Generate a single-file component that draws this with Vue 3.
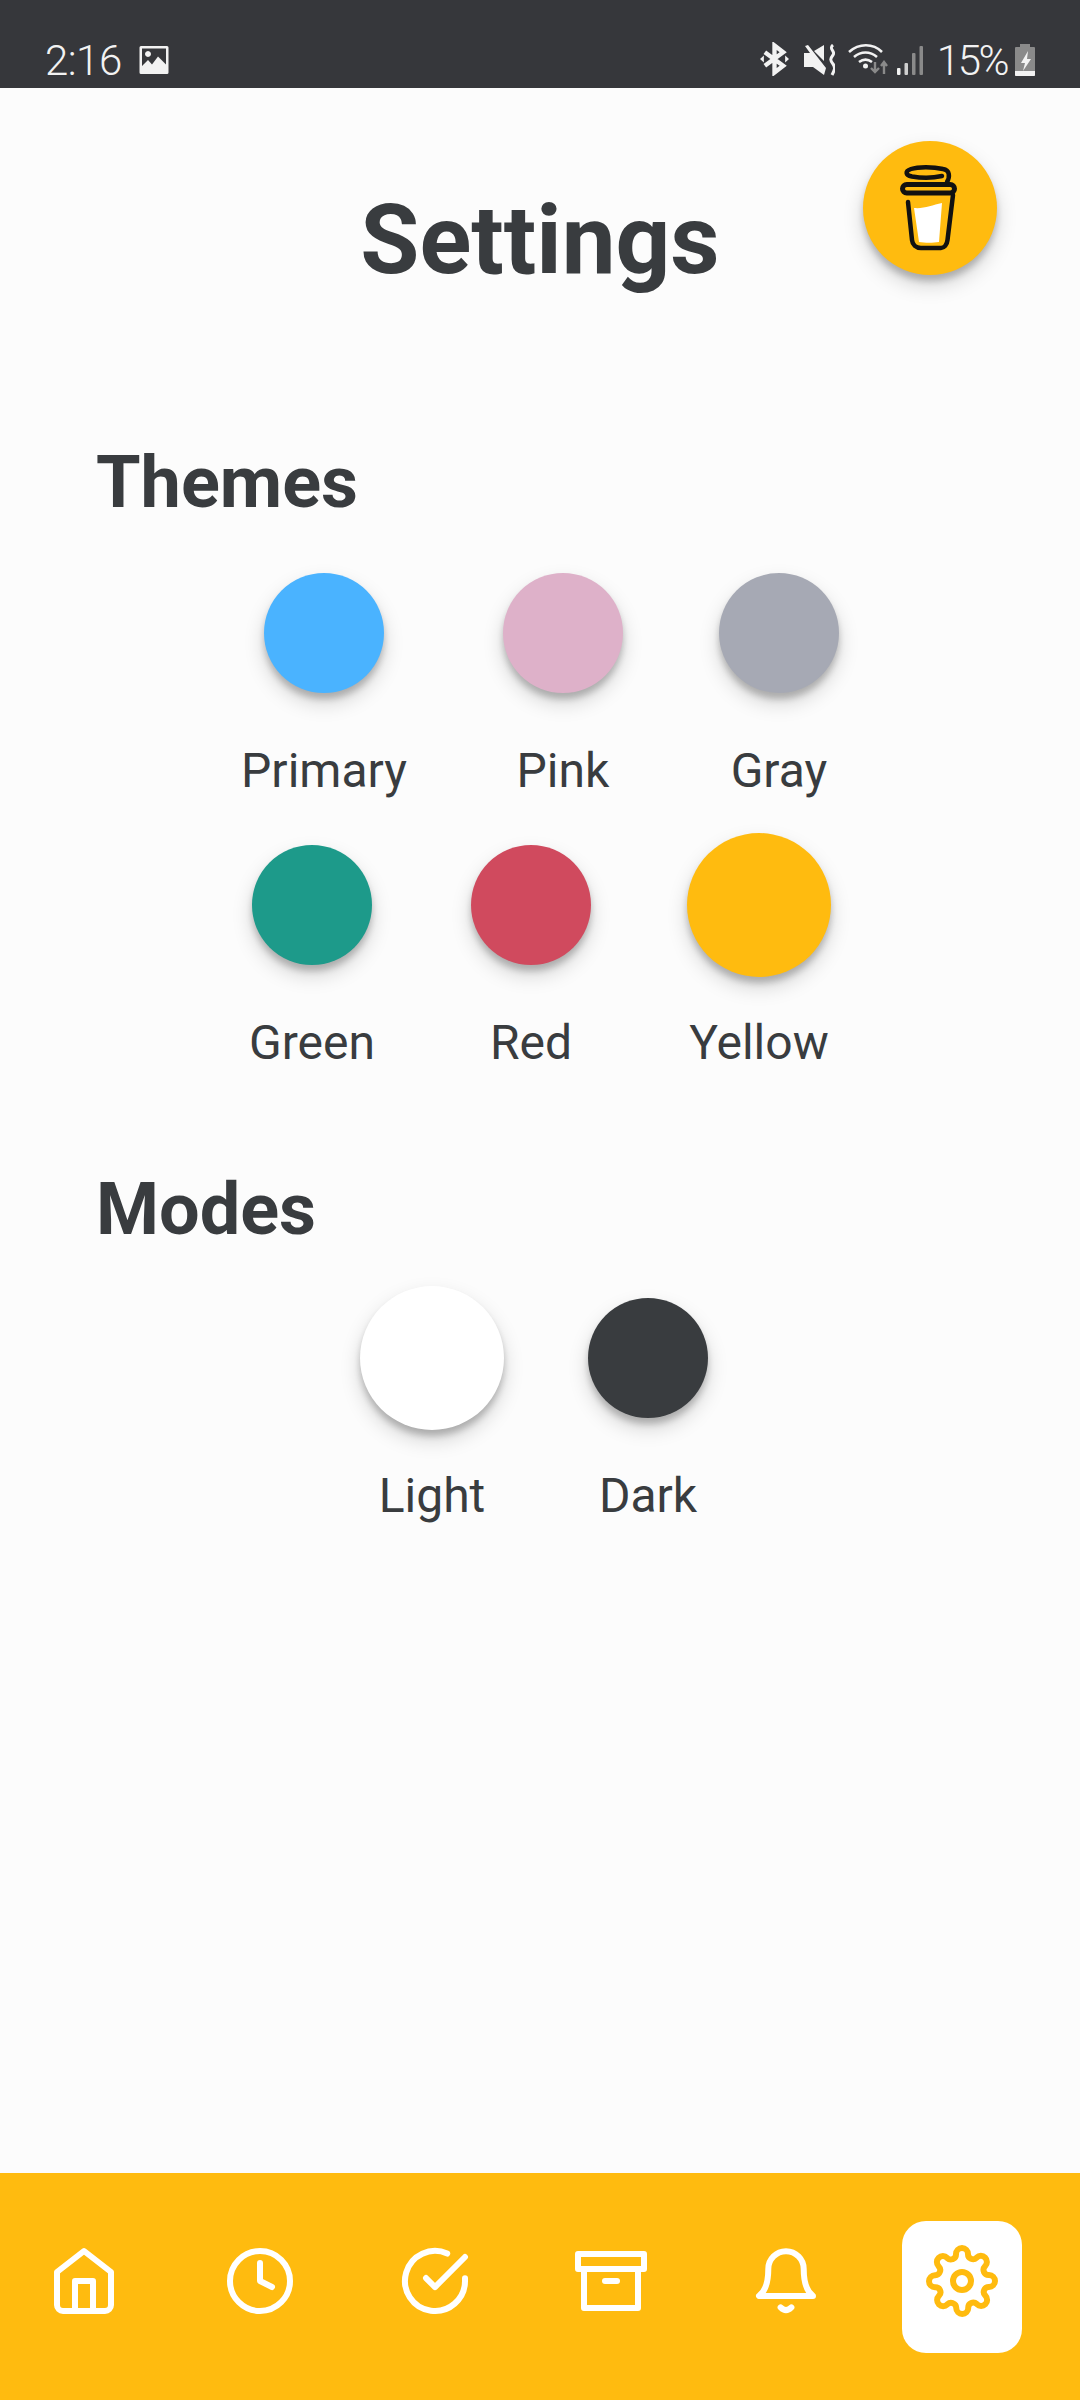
<template>
  <div class="screen">
    <div class="status">
      <span class="time">2:16</span>
      <svg class="pic" width="30" height="30" viewBox="0 0 30 30">
        <path fill="#f2f2f2" fill-rule="evenodd" d="M2 1h26a1.500 1.500 0 0 1 1.500 1.500v25a1.500 1.500 0 0 1-1.500 1.500H2a1.500 1.500 0 0 1-1.500-1.500v-25A1.500 1.500 0 0 1 2 1zM3 3.500V21l6-6 4 4.500 6-8L27 19.500V3.500zM9 6a3 3 0 1 0 .01 0z"/>
      </svg>
      <div class="status-right">
        <svg width="29" height="34" viewBox="0 0 30 34" fill="none" stroke="#f2f2f2">
          <path stroke-width="4.500" d="M5 10l19 14-9 7V3l9 7L5 24"/>
          <path fill="#f2f2f2" stroke="none" d="M0 17l4-3.500v7zM30 17l-4-3.500v7z"/>
        </svg>
        <svg class="mute" width="31" height="32" viewBox="0 0 31 32" fill="none">
          <path fill="#f2f2f2" d="M1 2l3-1 18 23-2 7-11-8H0V9h6zM10 7l10-6v16z"/>
          <path stroke="#f2f2f2" stroke-width="3" d="M29 1c-5 4 3 6 0 10-3 4-3 5 0 9 3 4 1 7-1 11"/>
        </svg>
        <svg class="wifi" width="40" height="34" viewBox="0 0 40 34" fill="none" stroke="#f2f2f2">
          <path stroke-width="2.600" d="M1 10c10-9 24-9 33 0M6 15c7-6 16-6 23 0M11 20c4-3 9-3 13 0"/>
          <circle cx="17.500" cy="24" r="2.500" fill="#f2f2f2" stroke="none"/>
          <path stroke="#8a8a8a" stroke-width="2.400" d="M27 20v10M23 26l4 4 4-4M36 32V20M33 24l3-4 3 4"/>
        </svg>
        <svg class="bars" width="26" height="32" viewBox="0 0 26 32">
          <rect x="0" y="24" width="3.500" height="7" rx="1" fill="#f2f2f2"/>
          <rect x="7.500" y="19" width="3.500" height="12" rx="1" fill="#cfcfcf"/>
          <rect x="15" y="9" width="3.500" height="22" rx="1" fill="#8a8a8a"/>
          <rect x="22.500" y="2" width="3.500" height="29" rx="1" fill="#8a8a8a"/>
        </svg>
        <span class="pct">15%</span>
        <svg class="batt" width="20" height="32" viewBox="0 0 20 32">
          <path fill="#8a8a8a" d="M5 0h10v3h4a1 1 0 0 1 1 1v27a1 1 0 0 1-1 1H1a1 1 0 0 1-1-1V4a1 1 0 0 1 1-1h4z"/>
          <path fill="#f2f2f2" d="M0 27h20v4a1 1 0 0 1-1 1H1a1 1 0 0 1-1-1z"/>
          <path fill="#f2f2f2" d="M13 7l-7 12h4l-2 8 8-12h-4z"/>
        </svg>
      </div>
    </div>

    <main class="content">
      <header class="head">
        <h1>Settings</h1>
        <button class="coffee">
          <svg width="134" height="134" viewBox="0 0 134 134" fill="none">
            <path fill="#fff" d="M51 67c10 1 18-3 28-5l-3 39c-6 1-14 1-20 0z"/>
            <path stroke="#111" stroke-width="4.500" stroke-linecap="round" stroke-linejoin="round" d="M45 61l4 38c.5 5 4 8 9 8h20c3 0 6-3 6.500-8l5.500-45"/>
            <rect x="39.500" y="43.500" width="52" height="8.500" rx="4.250" stroke="#111" stroke-width="5"/>
            <path stroke="#111" stroke-width="4.500" stroke-linecap="round" d="M84 41C87 36 87 29 80 28 70 25.500 55 25.500 48 28 42 30 42 34 49 35.500 58 37 70 37 79 35"/>
          </svg>
        </button>
      </header>

      <section class="block themes">
        <h2>Themes</h2>
        <div class="row" v-for="(row, i) in themes" :key="i">
          <div class="swatch" v-for="t in row" :key="t.name">
            <div class="dot-box">
              <span class="dot" :class="{ active: t.active }" :style="{ background: t.color }"></span>
            </div>
            <span class="name">{{ t.name }}</span>
          </div>
        </div>
      </section>

      <section class="block modes">
        <h2>Modes</h2>
        <div class="row">
          <div class="swatch" v-for="m in modes" :key="m.name">
            <div class="dot-box">
              <span class="dot" :class="{ active: m.active }" :style="{ background: m.color }"></span>
            </div>
            <span class="name">{{ m.name }}</span>
          </div>
        </div>
      </section>
    </main>

    <nav class="nav">
      <a class="nav-item" v-for="item in nav" :key="item.name" :class="{ current: item.current }">
        <svg width="72" height="72" viewBox="0 0 24 24" fill="none" stroke="currentColor" stroke-width="2" stroke-linecap="round" stroke-linejoin="round">
          <path v-for="d in item.paths" :key="d" :d="d" />
        </svg>
      </a>
    </nav>
  </div>
</template>

<script setup>
const themes = [
  [
    { name: "Primary", color: "#4ab3ff" },
    { name: "Pink", color: "#deb1c9" },
    { name: "Gray", color: "#a6a9b4" },
  ],
  [
    { name: "Green", color: "#1d9a8a" },
    { name: "Red", color: "#d04a5e" },
    { name: "Yellow", color: "#ffbb0f", active: true },
  ],
];

const modes = [
  { name: "Light", color: "#ffffff", active: true },
  { name: "Dark", color: "#393c3f" },
];

const nav = [
  {
    name: "home",
    paths: ["M3 9l9-7 9 7v11a2 2 0 0 1-2 2H5a2 2 0 0 1-2-2z", "M9 22V12h6v10"],
  },
  {
    name: "history",
    paths: ["M22 12a10 10 0 1 1-20 0 10 10 0 0 1 20 0z", "M12 6v6l4 2"],
  },
  {
    name: "done",
    paths: ["M22 11.080V12a10 10 0 1 1-5.930-9.140", "M22 4L12 14.010l-3-3"],
  },
  {
    name: "archive",
    paths: ["M21 8v13H3V8", "M1 3h22v5H1z", "M10 12h4"],
  },
  {
    name: "alerts",
    paths: [
      "M3 17h18c-2-1.500-3.100-4-3.100-9a5.900 5.900 0 0 0-11.800 0c0 5-1.100 7.500-3.100 9z",
      "M10.200 20.800q1.800 1.800 3.600 0",
    ],
  },
  {
    name: "settings",
    current: true,
    paths: [
      "M15 12a3 3 0 1 1-6 0 3 3 0 0 1 6 0z",
      "M19.400 15a1.650 1.650 0 0 0 .33 1.820l.06.06a2 2 0 0 1 0 2.830 2 2 0 0 1-2.830 0l-.06-.06a1.650 1.650 0 0 0-1.820-.33 1.650 1.650 0 0 0-1 1.510V21a2 2 0 0 1-2 2 2 2 0 0 1-2-2v-.09A1.650 1.650 0 0 0 9 19.400a1.650 1.650 0 0 0-1.820.33l-.06.06a2 2 0 0 1-2.830 0 2 2 0 0 1 0-2.830l.06-.06a1.650 1.650 0 0 0 .33-1.820 1.650 1.650 0 0 0-1.510-1H3a2 2 0 0 1-2-2 2 2 0 0 1 2-2h.09A1.650 1.650 0 0 0 4.600 9a1.650 1.650 0 0 0-.33-1.820l-.06-.06a2 2 0 0 1 0-2.830 2 2 0 0 1 2.830 0l.06.06a1.650 1.650 0 0 0 1.820.33H9a1.650 1.650 0 0 0 1-1.510V3a2 2 0 0 1 2-2 2 2 0 0 1 2 2v.09a1.650 1.650 0 0 0 1 1.510 1.650 1.650 0 0 0 1.820-.33l.06-.06a2 2 0 0 1 2.830 0 2 2 0 0 1 0 2.830l-.06.06a1.650 1.650 0 0 0-.33 1.820V9a1.650 1.650 0 0 0 1.510 1H21a2 2 0 0 1 2 2 2 2 0 0 1-2 2h-.09a1.650 1.650 0 0 0-1.510 1z",
    ],
  },
];
</script>

<style>
html,
body {
  margin: 0;
  background: #fcfcfc;
}
</style>

<style scoped>
.screen {
  width: 1080px;
  height: 2400px;
  display: flex;
  flex-direction: column;
  background: #fcfcfc;
  color: #393c3f;
  font-family: Roboto, sans-serif;
  overflow: hidden;
}

.status {
  height: 88px;
  box-sizing: border-box;
  flex: none;
  display: flex;
  align-items: flex-end;
  padding: 0 45px 2px 45px;
  background: #36373b;
  color: #f2f2f2;
}
.time,
.pct {
  font-size: 42px;
  line-height: 50px;
  font-weight: 300;
  letter-spacing: -0.5px;
}
.pic {
  margin: 0 0 11px 17px;
}
.status-right {
  margin-left: auto;
  display: flex;
  align-items: flex-end;
}
.status-right svg {
  margin-bottom: 10px;
}
.mute {
  margin-left: 15px;
}
.wifi {
  margin-left: 13px;
  margin-right: 9px;
}
.pct {
  margin-left: 14px;
  letter-spacing: -2.500px;
}
.batt {
  margin-left: 8px;
}

.content {
  flex: 1;
  padding: 0 96px;
}
.head {
  position: relative;
  padding-top: 96px;
  text-align: center;
}
h1 {
  margin: 0;
  font-size: 96px;
  line-height: 112px;
  font-weight: 700;
}
.coffee {
  position: absolute;
  top: 53px;
  left: 767px;
  width: 134px;
  height: 134px;
  padding: 0;
  border: 0;
  border-radius: 50%;
  background: #ffbb0f;
  box-shadow: 0 6px 6px rgba(0, 0, 0, 0.2), 0 10px 20px rgba(0, 0, 0, 0.17);
}
.coffee svg {
  display: block;
}

.block h2 {
  margin: 0 0 36px;
  font-size: 72px;
  line-height: 84px;
  font-weight: 700;
}
.themes {
  margin-top: 145px;
}
.modes {
  margin-top: 97px;
}
.modes h2 {
  margin-bottom: 34px;
}
.row {
  display: flex;
  justify-content: center;
  gap: 96px;
  margin-bottom: 34px;
}
.modes .row {
  gap: 84px;
  padding-right: 12px;
}
.swatch {
  display: flex;
  flex-direction: column;
  align-items: center;
}
.dot-box {
  height: 144px;
  display: flex;
  align-items: center;
}
.dot {
  width: 120px;
  height: 120px;
  border-radius: 50%;
  box-shadow: 0 6px 6px rgba(0, 0, 0, 0.2), 0 10px 20px rgba(0, 0, 0, 0.17);
}
.dot.active {
  width: 144px;
  height: 144px;
}
.name {
  margin-top: 38px;
  font-size: 48px;
  line-height: 56px;
}

.nav {
  flex: none;
  height: 227px;
  box-sizing: border-box;
  display: flex;
  gap: 55.6px;
  padding: 48px 0 0 24px;
  background: #ffbb0f;
  color: #fff;
}
.nav-item {
  flex: none;
  width: 120px;
  height: 132px;
  box-sizing: border-box;
  display: flex;
  justify-content: center;
  padding-top: 24px;
  border-radius: 24px;
}
.nav-item.current {
  background: #fff;
  color: #ffbb0f;
}
</style>
